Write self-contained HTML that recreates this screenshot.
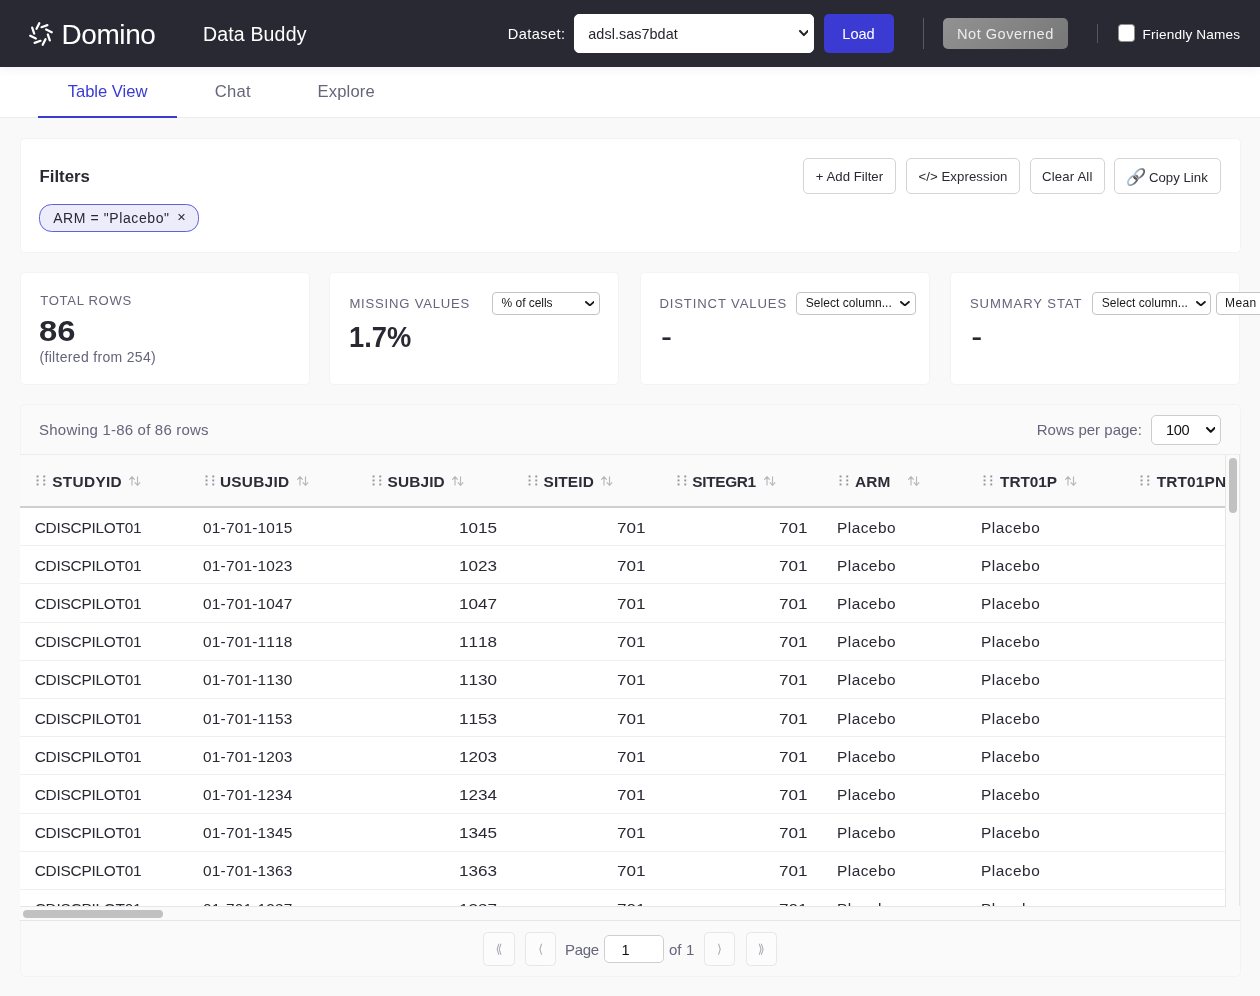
<!DOCTYPE html>
<html lang="en">
<head>
<meta charset="utf-8">
<title>Data Buddy</title>
<style>
*{box-sizing:border-box;margin:0;padding:0}
html,body{width:1260px;height:996px;overflow:hidden}
body{will-change:transform;background:#f9f9f9;font-family:"Liberation Sans",sans-serif;color:#292933;position:relative}
.abs{position:absolute}
.t{position:absolute;white-space:nowrap;line-height:1}
#hdr{position:absolute;left:0;top:0;width:1260px;height:66.7px;background:#292933;box-shadow:0 1px 11px rgba(0,0,0,.07);z-index:5}
#tabs{position:absolute;left:0;top:66px;width:1260px;height:52px;background:#fff;border-bottom:1px solid #ececec}
.card{position:absolute;background:#fff;border:1px solid #f3f3f3;border-radius:4.5px}
.btn{position:absolute;top:158px;height:36px;border:1px solid #d4d4d4;border-radius:5px;background:#fff}
.sel{position:absolute;background:#fff;border:1px solid #c4c4c4;border-radius:4px}
.row{position:absolute;left:0;width:1206px;height:1px;background:#efefef}
.pb{position:absolute;top:932px;height:34px;border:1px solid #e7e7e7;border-radius:4.5px;background:#fcfcfc;color:#a9a9b1;font-family:"DejaVu Sans",sans-serif;font-size:12.5px;line-height:32px;text-align:center}
</style>
</head>
<body>
<div id="hdr">
<svg class="abs" style="left:27px;top:20px" width="28" height="28" viewBox="27 20 28 28" fill="none" stroke="#fff" stroke-width="2.25" stroke-linecap="round"><path d="M39.28 23.25 36.52 28.85M47.38 25.18 41.48 27.19M51.75 32.28 46.15 29.52M49.82 40.38 47.81 34.48M42.72 44.75 45.48 39.15M34.62 42.82 40.52 40.81M30.25 35.72 35.85 38.48M32.18 27.62 34.19 33.52"/></svg>
<div class="t" style="left:61.6px;top:20.6px;font-size:28px;color:#fff;letter-spacing:-0.45px">Domino</div>
<div class="t" style="left:202.9px;top:24.7px;font-size:19.5px;color:#fff;letter-spacing:0.18px">Data Buddy</div>
<div class="t" style="left:507.8px;top:27.2px;font-size:14.6px;color:#fff;letter-spacing:0.40px">Dataset:</div>
<div class="sel" style="left:574px;top:14px;width:239.5px;height:38.5px;border-color:#fff;border-radius:5px"></div>
<div class="t" style="left:588.3px;top:27.2px;font-size:14.4px;color:#26262e;letter-spacing:0.05px">adsl.sas7bdat</div>
<svg class="abs" style="left:798.5px;top:30.3px" width="9.8" height="6.3" viewBox="0 0 9.8 6.3" fill="none" stroke="#222" stroke-width="2" stroke-linecap="round" stroke-linejoin="round"><path d="M1.00 1.00 4.90 5.10 8.80 1.00"/></svg>
<div class="abs" style="left:824px;top:14px;width:70px;height:38.5px;border-radius:5px;background:#3b3bd3"></div>
<div class="t" style="left:842.3px;top:27.0px;font-size:14.6px;color:#fff;letter-spacing:-0.02px">Load</div>
<div class="abs" style="left:923px;top:18px;width:1px;height:30.8px;background:#5a5a63"></div>
<div class="abs" style="left:943px;top:18px;width:125px;height:30.8px;border-radius:5px;background:linear-gradient(135deg,#929292,#777)"></div>
<div class="t" style="left:957.0px;top:27.0px;font-size:14.6px;color:#ececec;letter-spacing:0.50px">Not Governed</div>
<div class="abs" style="left:1097px;top:24px;width:1px;height:18.5px;background:#55555f"></div>
<div class="abs" style="left:1117.5px;top:24px;width:17.5px;height:17.5px;border-radius:3.5px;background:#fff;border:1px solid #8c8c8c"></div>
<div class="t" style="left:1142.6px;top:28.0px;font-size:13.6px;color:#fff;letter-spacing:0.18px">Friendly Names</div>
</div>
<div id="tabs"></div>
<div class="abs" style="left:38px;top:116px;width:139px;height:2px;background:#3b3bd3"></div>
<div class="t" style="left:67.7px;top:84.0px;font-size:16.6px;color:#3b3bd3;letter-spacing:-0.03px">Table View</div>
<div class="t" style="left:214.7px;top:84.0px;font-size:16.6px;color:#65657b;letter-spacing:0.30px">Chat</div>
<div class="t" style="left:317.6px;top:84.0px;font-size:16.6px;color:#65657b;letter-spacing:0.13px">Explore</div>
<div class="card" style="left:20px;top:138px;width:1220.5px;height:115px"></div>
<div class="t" style="left:39.6px;top:169.3px;font-size:16.8px;color:#292933;font-weight:bold;letter-spacing:-0.03px">Filters</div>
<div class="btn" style="left:803.2px;width:92.6px"></div>
<div class="t" style="left:815.8px;top:170.0px;font-size:13.2px;color:#292933;letter-spacing:0.02px">+ Add Filter</div>
<div class="btn" style="left:906.4px;width:113.5px"></div>
<div class="t" style="left:918.4px;top:170.0px;font-size:13.2px;color:#292933;letter-spacing:0.08px">&lt;/&gt; Expression</div>
<div class="btn" style="left:1030.4px;width:74.5px"></div>
<div class="t" style="left:1042.1px;top:170.0px;font-size:13.2px;color:#292933;letter-spacing:0.14px">Clear All</div>
<div class="btn" style="left:1114.2px;width:106.6px"></div>
<div class="t" style="left:1148.9px;top:171.0px;font-size:13.2px;color:#292933;letter-spacing:0.03px">Copy Link</div>
<svg class="abs" style="left:1126px;top:167px" width="20" height="20" viewBox="0 0 20 20" fill="none"><defs><linearGradient id="lg" x1="0" y1="0" x2="1" y2="1"><stop offset="0" stop-color="#b9d2e6"/><stop offset="0.55" stop-color="#8e99a4"/><stop offset="1" stop-color="#4a4242"/></linearGradient></defs><g transform="rotate(-45 10 10)" stroke="url(#lg)" stroke-width="2"><ellipse cx="5.4" cy="10" rx="5.9" ry="3.4"/><ellipse cx="14.6" cy="10" rx="5.9" ry="3.4"/><path d="M8.9 12.2C8.5 11.4 8.5 8.9 8.9 7.9" stroke="#574e4e" stroke-width="2.1"/></g></svg>
<div class="abs" style="left:39px;top:204px;width:160px;height:28px;border-radius:12.5px;background:#ececfb;border:1px solid #6060d9"></div>
<div class="t" style="left:53.2px;top:210.5px;font-size:14px;color:#292933;letter-spacing:0.59px">ARM = "Placebo"</div>
<div class="t" style="left:177.3px;top:209.6px;font-size:14.5px;color:#292933">×</div>
<div class="card" style="left:20.0px;top:272px;width:289.8px;height:113px"></div>
<div class="card" style="left:329.4px;top:272px;width:289.8px;height:113px"></div>
<div class="card" style="left:640.0px;top:272px;width:289.8px;height:113px"></div>
<div class="card" style="left:950.4px;top:272px;width:289.8px;height:113px"></div>
<div class="t" style="left:40.3px;top:293.9px;font-size:13.1px;color:#65657b;letter-spacing:0.67px">TOTAL ROWS</div>
<div class="t" style="left:39.3px;top:316.5px;font-size:29.2px;color:#292933;font-weight:bold;transform:scaleX(1.123);transform-origin:0 0">86</div>
<div class="t" style="left:39.5px;top:349.7px;font-size:14px;color:#65657b;letter-spacing:0.32px">(filtered from 254)</div>
<div class="t" style="left:349.4px;top:297.0px;font-size:13.1px;color:#65657b;letter-spacing:0.79px">MISSING VALUES</div>
<div class="t" style="left:348.6px;top:322.7px;font-size:29.2px;color:#292933;font-weight:bold;transform:scaleX(0.936);transform-origin:0 0">1.7%</div>
<div class="t" style="left:659.4px;top:297.0px;font-size:13.1px;color:#65657b;letter-spacing:0.88px">DISTINCT VALUES</div>
<div class="t" style="left:969.9px;top:297.0px;font-size:13.1px;color:#65657b;letter-spacing:0.91px">SUMMARY STAT</div>
<div class="t" style="left:660.9px;top:320.3px;font-size:33px;color:#292933">-</div>
<div class="t" style="left:971.3px;top:320.3px;font-size:33px;color:#292933">-</div>
<div class="sel" style="left:492.3px;top:292px;width:107.5px;height:23px"></div>
<div class="t" style="left:501.6px;top:296.8px;font-size:12px;color:#1a1a1a;letter-spacing:-0.04px">% of cells</div>
<svg class="abs" style="left:584.5px;top:300.6px" width="9.8" height="5.5" viewBox="0 0 9.8 5.5" fill="none" stroke="#1a1a1a" stroke-width="1.9" stroke-linecap="round" stroke-linejoin="round"><path d="M0.95 0.95 4.90 4.35 8.85 0.95"/></svg>
<div class="sel" style="left:796.1px;top:292px;width:119.6px;height:23px"></div>
<div class="t" style="left:805.7px;top:296.8px;font-size:12px;color:#1a1a1a;letter-spacing:0.05px">Select column...</div>
<svg class="abs" style="left:900.2px;top:300.6px" width="9.8" height="5.5" viewBox="0 0 9.8 5.5" fill="none" stroke="#1a1a1a" stroke-width="1.9" stroke-linecap="round" stroke-linejoin="round"><path d="M0.95 0.95 4.90 4.35 8.85 0.95"/></svg>
<div class="sel" style="left:1092.2px;top:292px;width:119.3px;height:23px"></div>
<div class="t" style="left:1101.7px;top:296.8px;font-size:12px;color:#1a1a1a;letter-spacing:0.06px">Select column...</div>
<svg class="abs" style="left:1196.3px;top:300.6px" width="9.8" height="5.5" viewBox="0 0 9.8 5.5" fill="none" stroke="#1a1a1a" stroke-width="1.9" stroke-linecap="round" stroke-linejoin="round"><path d="M0.95 0.95 4.90 4.35 8.85 0.95"/></svg>
<div class="sel" style="left:1216.3px;top:292px;width:73.7px;height:23px"></div>
<div class="t" style="left:1225.1px;top:296.8px;font-size:12px;color:#1a1a1a;letter-spacing:0.37px">Mean</div>
<div class="card" style="left:20px;top:404px;width:1220.5px;height:572.5px;background:#fafafa"></div>
<div class="t" style="left:39.1px;top:422.0px;font-size:15px;color:#65657b;letter-spacing:0.20px">Showing 1-86 of 86 rows</div>
<div class="t" style="left:1036.7px;top:421.8px;font-size:15px;color:#65657b;letter-spacing:0.01px">Rows per page:</div>
<div class="sel" style="left:1151.4px;top:415px;width:69.4px;height:30px;border-color:#cdcdcd;border-radius:5px"></div>
<div class="t" style="left:1166.1px;top:422.6px;font-size:14.6px;color:#111;letter-spacing:-0.37px">100</div>
<svg class="abs" style="left:1205.8px;top:427.4px" width="9.6" height="6.1" viewBox="0 0 9.6 6.1" fill="none" stroke="#111" stroke-width="2" stroke-linecap="round" stroke-linejoin="round"><path d="M1.00 1.00 4.80 4.90 8.60 1.00"/></svg>
<div class="abs" style="left:20.0px;top:454.3px;width:1219.5px;height:1px;background:#ececec"></div>
<div class="abs" style="left:20.0px;top:455.3px;width:1205.2px;height:450.8px;overflow:hidden;background:#fff">
<div class="abs" style="left:0;top:0;width:1206px;height:50.7px;background:#fafafa"></div>
<div class="abs" style="left:0;top:50.7px;width:1206px;height:2px;background:#cfcfcf"></div>
<svg class="abs" style="left:16.2px;top:20.1px" width="10" height="11" viewBox="0 0 10 11" fill="#92929c"><rect x="0.6" y="0.5" width="1.9" height="1.9"/><rect x="7.3" y="0.5" width="1.9" height="1.9"/><rect x="0.6" y="4.5" width="1.9" height="1.9"/><rect x="7.3" y="4.5" width="1.9" height="1.9"/><rect x="0.6" y="8.5" width="1.9" height="1.9"/><rect x="7.3" y="8.5" width="1.9" height="1.9"/></svg>
<div class="t" style="left:32.3px;top:18.5px;font-size:15.4px;color:#2d2d37;font-weight:bold;letter-spacing:0.30px">STUDYID</div>
<svg class="abs" style="left:109.0px;top:21.0px" width="12" height="10.5" viewBox="0 0 12 10.5" fill="none" stroke="#b7b7be" stroke-width="1.15" stroke-linecap="round" stroke-linejoin="round"><path d="M3 9V0.7M0.6 3.3 3 0.7 5.4 3.3M8.5 0.8V9.3M6.1 6.7 8.5 9.3 10.9 6.7"/></svg>
<svg class="abs" style="left:184.5px;top:20.1px" width="10" height="11" viewBox="0 0 10 11" fill="#92929c"><rect x="0.6" y="0.5" width="1.9" height="1.9"/><rect x="7.3" y="0.5" width="1.9" height="1.9"/><rect x="0.6" y="4.5" width="1.9" height="1.9"/><rect x="7.3" y="4.5" width="1.9" height="1.9"/><rect x="0.6" y="8.5" width="1.9" height="1.9"/><rect x="7.3" y="8.5" width="1.9" height="1.9"/></svg>
<div class="t" style="left:199.9px;top:18.5px;font-size:15.4px;color:#2d2d37;font-weight:bold;letter-spacing:0.28px">USUBJID</div>
<svg class="abs" style="left:276.8px;top:21.0px" width="12" height="10.5" viewBox="0 0 12 10.5" fill="none" stroke="#b7b7be" stroke-width="1.15" stroke-linecap="round" stroke-linejoin="round"><path d="M3 9V0.7M0.6 3.3 3 0.7 5.4 3.3M8.5 0.8V9.3M6.1 6.7 8.5 9.3 10.9 6.7"/></svg>
<svg class="abs" style="left:351.8px;top:20.1px" width="10" height="11" viewBox="0 0 10 11" fill="#92929c"><rect x="0.6" y="0.5" width="1.9" height="1.9"/><rect x="7.3" y="0.5" width="1.9" height="1.9"/><rect x="0.6" y="4.5" width="1.9" height="1.9"/><rect x="7.3" y="4.5" width="1.9" height="1.9"/><rect x="0.6" y="8.5" width="1.9" height="1.9"/><rect x="7.3" y="8.5" width="1.9" height="1.9"/></svg>
<div class="t" style="left:367.6px;top:18.5px;font-size:15.4px;color:#2d2d37;font-weight:bold;letter-spacing:0.13px">SUBJID</div>
<svg class="abs" style="left:432.2px;top:21.0px" width="12" height="10.5" viewBox="0 0 12 10.5" fill="none" stroke="#b7b7be" stroke-width="1.15" stroke-linecap="round" stroke-linejoin="round"><path d="M3 9V0.7M0.6 3.3 3 0.7 5.4 3.3M8.5 0.8V9.3M6.1 6.7 8.5 9.3 10.9 6.7"/></svg>
<svg class="abs" style="left:507.5px;top:20.1px" width="10" height="11" viewBox="0 0 10 11" fill="#92929c"><rect x="0.6" y="0.5" width="1.9" height="1.9"/><rect x="7.3" y="0.5" width="1.9" height="1.9"/><rect x="0.6" y="4.5" width="1.9" height="1.9"/><rect x="7.3" y="4.5" width="1.9" height="1.9"/><rect x="0.6" y="8.5" width="1.9" height="1.9"/><rect x="7.3" y="8.5" width="1.9" height="1.9"/></svg>
<div class="t" style="left:523.6px;top:18.5px;font-size:15.4px;color:#2d2d37;font-weight:bold;letter-spacing:0.11px">SITEID</div>
<svg class="abs" style="left:581.0px;top:21.0px" width="12" height="10.5" viewBox="0 0 12 10.5" fill="none" stroke="#b7b7be" stroke-width="1.15" stroke-linecap="round" stroke-linejoin="round"><path d="M3 9V0.7M0.6 3.3 3 0.7 5.4 3.3M8.5 0.8V9.3M6.1 6.7 8.5 9.3 10.9 6.7"/></svg>
<svg class="abs" style="left:656.8px;top:20.1px" width="10" height="11" viewBox="0 0 10 11" fill="#92929c"><rect x="0.6" y="0.5" width="1.9" height="1.9"/><rect x="7.3" y="0.5" width="1.9" height="1.9"/><rect x="0.6" y="4.5" width="1.9" height="1.9"/><rect x="7.3" y="4.5" width="1.9" height="1.9"/><rect x="0.6" y="8.5" width="1.9" height="1.9"/><rect x="7.3" y="8.5" width="1.9" height="1.9"/></svg>
<div class="t" style="left:672.3px;top:18.5px;font-size:15.4px;color:#2d2d37;font-weight:bold;letter-spacing:-0.34px">SITEGR1</div>
<svg class="abs" style="left:744.0px;top:21.0px" width="12" height="10.5" viewBox="0 0 12 10.5" fill="none" stroke="#b7b7be" stroke-width="1.15" stroke-linecap="round" stroke-linejoin="round"><path d="M3 9V0.7M0.6 3.3 3 0.7 5.4 3.3M8.5 0.8V9.3M6.1 6.7 8.5 9.3 10.9 6.7"/></svg>
<svg class="abs" style="left:819.2px;top:20.1px" width="10" height="11" viewBox="0 0 10 11" fill="#92929c"><rect x="0.6" y="0.5" width="1.9" height="1.9"/><rect x="7.3" y="0.5" width="1.9" height="1.9"/><rect x="0.6" y="4.5" width="1.9" height="1.9"/><rect x="7.3" y="4.5" width="1.9" height="1.9"/><rect x="0.6" y="8.5" width="1.9" height="1.9"/><rect x="7.3" y="8.5" width="1.9" height="1.9"/></svg>
<div class="t" style="left:835.1px;top:18.5px;font-size:15.4px;color:#2d2d37;font-weight:bold;letter-spacing:0.08px">ARM</div>
<svg class="abs" style="left:887.8px;top:21.0px" width="12" height="10.5" viewBox="0 0 12 10.5" fill="none" stroke="#b7b7be" stroke-width="1.15" stroke-linecap="round" stroke-linejoin="round"><path d="M3 9V0.7M0.6 3.3 3 0.7 5.4 3.3M8.5 0.8V9.3M6.1 6.7 8.5 9.3 10.9 6.7"/></svg>
<svg class="abs" style="left:962.5px;top:20.1px" width="10" height="11" viewBox="0 0 10 11" fill="#92929c"><rect x="0.6" y="0.5" width="1.9" height="1.9"/><rect x="7.3" y="0.5" width="1.9" height="1.9"/><rect x="0.6" y="4.5" width="1.9" height="1.9"/><rect x="7.3" y="4.5" width="1.9" height="1.9"/><rect x="0.6" y="8.5" width="1.9" height="1.9"/><rect x="7.3" y="8.5" width="1.9" height="1.9"/></svg>
<div class="t" style="left:980.1px;top:18.5px;font-size:15.4px;color:#2d2d37;font-weight:bold;letter-spacing:-0.07px">TRT01P</div>
<svg class="abs" style="left:1044.8px;top:21.0px" width="12" height="10.5" viewBox="0 0 12 10.5" fill="none" stroke="#b7b7be" stroke-width="1.15" stroke-linecap="round" stroke-linejoin="round"><path d="M3 9V0.7M0.6 3.3 3 0.7 5.4 3.3M8.5 0.8V9.3M6.1 6.7 8.5 9.3 10.9 6.7"/></svg>
<svg class="abs" style="left:1119.5px;top:20.1px" width="10" height="11" viewBox="0 0 10 11" fill="#92929c"><rect x="0.6" y="0.5" width="1.9" height="1.9"/><rect x="7.3" y="0.5" width="1.9" height="1.9"/><rect x="0.6" y="4.5" width="1.9" height="1.9"/><rect x="7.3" y="4.5" width="1.9" height="1.9"/><rect x="0.6" y="8.5" width="1.9" height="1.9"/><rect x="7.3" y="8.5" width="1.9" height="1.9"/></svg>
<div class="t" style="left:1136.8px;top:18.5px;font-size:15.4px;color:#2d2d37;font-weight:bold;letter-spacing:0.13px">TRT01PN</div>
<div class="t" style="left:14.7px;top:64.7px;font-size:15.4px;color:#292933;letter-spacing:-0.23px">CDISCPILOT01</div>
<div class="t" style="left:183.1px;top:64.7px;font-size:15.4px;color:#292933;letter-spacing:0.19px;font-kerning:none">01-701-1015</div>
<div class="t" style="left:438.5px;top:64.7px;font-size:15.4px;color:#292933;font-kerning:none;transform:scaleX(1.111);transform-origin:0 0">1015</div>
<div class="t" style="left:596.6px;top:64.7px;font-size:15.4px;color:#292933;font-kerning:none;transform:scaleX(1.111);transform-origin:0 0">701</div>
<div class="t" style="left:759.1px;top:64.7px;font-size:15.4px;color:#292933;font-kerning:none;transform:scaleX(1.111);transform-origin:0 0">701</div>
<div class="t" style="left:817.0px;top:64.7px;font-size:15.4px;color:#292933;letter-spacing:0.48px">Placebo</div>
<div class="t" style="left:961.0px;top:64.7px;font-size:15.4px;color:#292933;letter-spacing:0.52px">Placebo</div>
<div class="row" style="top:89.7px"></div>
<div class="t" style="left:14.7px;top:102.7px;font-size:15.4px;color:#292933;letter-spacing:-0.23px">CDISCPILOT01</div>
<div class="t" style="left:183.1px;top:102.7px;font-size:15.4px;color:#292933;letter-spacing:0.19px;font-kerning:none">01-701-1023</div>
<div class="t" style="left:438.5px;top:102.7px;font-size:15.4px;color:#292933;font-kerning:none;transform:scaleX(1.111);transform-origin:0 0">1023</div>
<div class="t" style="left:596.6px;top:102.7px;font-size:15.4px;color:#292933;font-kerning:none;transform:scaleX(1.111);transform-origin:0 0">701</div>
<div class="t" style="left:759.1px;top:102.7px;font-size:15.4px;color:#292933;font-kerning:none;transform:scaleX(1.111);transform-origin:0 0">701</div>
<div class="t" style="left:817.0px;top:102.7px;font-size:15.4px;color:#292933;letter-spacing:0.48px">Placebo</div>
<div class="t" style="left:961.0px;top:102.7px;font-size:15.4px;color:#292933;letter-spacing:0.52px">Placebo</div>
<div class="row" style="top:127.7px"></div>
<div class="t" style="left:14.7px;top:140.7px;font-size:15.4px;color:#292933;letter-spacing:-0.23px">CDISCPILOT01</div>
<div class="t" style="left:183.1px;top:140.7px;font-size:15.4px;color:#292933;letter-spacing:0.19px;font-kerning:none">01-701-1047</div>
<div class="t" style="left:438.5px;top:140.7px;font-size:15.4px;color:#292933;font-kerning:none;transform:scaleX(1.111);transform-origin:0 0">1047</div>
<div class="t" style="left:596.6px;top:140.7px;font-size:15.4px;color:#292933;font-kerning:none;transform:scaleX(1.111);transform-origin:0 0">701</div>
<div class="t" style="left:759.1px;top:140.7px;font-size:15.4px;color:#292933;font-kerning:none;transform:scaleX(1.111);transform-origin:0 0">701</div>
<div class="t" style="left:817.0px;top:140.7px;font-size:15.4px;color:#292933;letter-spacing:0.48px">Placebo</div>
<div class="t" style="left:961.0px;top:140.7px;font-size:15.4px;color:#292933;letter-spacing:0.52px">Placebo</div>
<div class="row" style="top:166.7px"></div>
<div class="t" style="left:14.7px;top:178.7px;font-size:15.4px;color:#292933;letter-spacing:-0.23px">CDISCPILOT01</div>
<div class="t" style="left:183.1px;top:178.7px;font-size:15.4px;color:#292933;letter-spacing:0.19px;font-kerning:none">01-701-1118</div>
<div class="t" style="left:438.5px;top:178.7px;font-size:15.4px;color:#292933;font-kerning:none;transform:scaleX(1.111);transform-origin:0 0">1118</div>
<div class="t" style="left:596.6px;top:178.7px;font-size:15.4px;color:#292933;font-kerning:none;transform:scaleX(1.111);transform-origin:0 0">701</div>
<div class="t" style="left:759.1px;top:178.7px;font-size:15.4px;color:#292933;font-kerning:none;transform:scaleX(1.111);transform-origin:0 0">701</div>
<div class="t" style="left:817.0px;top:178.7px;font-size:15.4px;color:#292933;letter-spacing:0.48px">Placebo</div>
<div class="t" style="left:961.0px;top:178.7px;font-size:15.4px;color:#292933;letter-spacing:0.52px">Placebo</div>
<div class="row" style="top:204.7px"></div>
<div class="t" style="left:14.7px;top:216.7px;font-size:15.4px;color:#292933;letter-spacing:-0.23px">CDISCPILOT01</div>
<div class="t" style="left:183.1px;top:216.7px;font-size:15.4px;color:#292933;letter-spacing:0.19px;font-kerning:none">01-701-1130</div>
<div class="t" style="left:438.5px;top:216.7px;font-size:15.4px;color:#292933;font-kerning:none;transform:scaleX(1.111);transform-origin:0 0">1130</div>
<div class="t" style="left:596.6px;top:216.7px;font-size:15.4px;color:#292933;font-kerning:none;transform:scaleX(1.111);transform-origin:0 0">701</div>
<div class="t" style="left:759.1px;top:216.7px;font-size:15.4px;color:#292933;font-kerning:none;transform:scaleX(1.111);transform-origin:0 0">701</div>
<div class="t" style="left:817.0px;top:216.7px;font-size:15.4px;color:#292933;letter-spacing:0.48px">Placebo</div>
<div class="t" style="left:961.0px;top:216.7px;font-size:15.4px;color:#292933;letter-spacing:0.52px">Placebo</div>
<div class="row" style="top:242.7px"></div>
<div class="t" style="left:14.7px;top:255.7px;font-size:15.4px;color:#292933;letter-spacing:-0.23px">CDISCPILOT01</div>
<div class="t" style="left:183.1px;top:255.7px;font-size:15.4px;color:#292933;letter-spacing:0.19px;font-kerning:none">01-701-1153</div>
<div class="t" style="left:438.5px;top:255.7px;font-size:15.4px;color:#292933;font-kerning:none;transform:scaleX(1.111);transform-origin:0 0">1153</div>
<div class="t" style="left:596.6px;top:255.7px;font-size:15.4px;color:#292933;font-kerning:none;transform:scaleX(1.111);transform-origin:0 0">701</div>
<div class="t" style="left:759.1px;top:255.7px;font-size:15.4px;color:#292933;font-kerning:none;transform:scaleX(1.111);transform-origin:0 0">701</div>
<div class="t" style="left:817.0px;top:255.7px;font-size:15.4px;color:#292933;letter-spacing:0.48px">Placebo</div>
<div class="t" style="left:961.0px;top:255.7px;font-size:15.4px;color:#292933;letter-spacing:0.52px">Placebo</div>
<div class="row" style="top:280.7px"></div>
<div class="t" style="left:14.7px;top:293.7px;font-size:15.4px;color:#292933;letter-spacing:-0.23px">CDISCPILOT01</div>
<div class="t" style="left:183.1px;top:293.7px;font-size:15.4px;color:#292933;letter-spacing:0.19px;font-kerning:none">01-701-1203</div>
<div class="t" style="left:438.5px;top:293.7px;font-size:15.4px;color:#292933;font-kerning:none;transform:scaleX(1.111);transform-origin:0 0">1203</div>
<div class="t" style="left:596.6px;top:293.7px;font-size:15.4px;color:#292933;font-kerning:none;transform:scaleX(1.111);transform-origin:0 0">701</div>
<div class="t" style="left:759.1px;top:293.7px;font-size:15.4px;color:#292933;font-kerning:none;transform:scaleX(1.111);transform-origin:0 0">701</div>
<div class="t" style="left:817.0px;top:293.7px;font-size:15.4px;color:#292933;letter-spacing:0.48px">Placebo</div>
<div class="t" style="left:961.0px;top:293.7px;font-size:15.4px;color:#292933;letter-spacing:0.52px">Placebo</div>
<div class="row" style="top:318.7px"></div>
<div class="t" style="left:14.7px;top:331.7px;font-size:15.4px;color:#292933;letter-spacing:-0.23px">CDISCPILOT01</div>
<div class="t" style="left:183.1px;top:331.7px;font-size:15.4px;color:#292933;letter-spacing:0.19px;font-kerning:none">01-701-1234</div>
<div class="t" style="left:438.5px;top:331.7px;font-size:15.4px;color:#292933;font-kerning:none;transform:scaleX(1.111);transform-origin:0 0">1234</div>
<div class="t" style="left:596.6px;top:331.7px;font-size:15.4px;color:#292933;font-kerning:none;transform:scaleX(1.111);transform-origin:0 0">701</div>
<div class="t" style="left:759.1px;top:331.7px;font-size:15.4px;color:#292933;font-kerning:none;transform:scaleX(1.111);transform-origin:0 0">701</div>
<div class="t" style="left:817.0px;top:331.7px;font-size:15.4px;color:#292933;letter-spacing:0.48px">Placebo</div>
<div class="t" style="left:961.0px;top:331.7px;font-size:15.4px;color:#292933;letter-spacing:0.52px">Placebo</div>
<div class="row" style="top:357.7px"></div>
<div class="t" style="left:14.7px;top:369.7px;font-size:15.4px;color:#292933;letter-spacing:-0.23px">CDISCPILOT01</div>
<div class="t" style="left:183.1px;top:369.7px;font-size:15.4px;color:#292933;letter-spacing:0.19px;font-kerning:none">01-701-1345</div>
<div class="t" style="left:438.5px;top:369.7px;font-size:15.4px;color:#292933;font-kerning:none;transform:scaleX(1.111);transform-origin:0 0">1345</div>
<div class="t" style="left:596.6px;top:369.7px;font-size:15.4px;color:#292933;font-kerning:none;transform:scaleX(1.111);transform-origin:0 0">701</div>
<div class="t" style="left:759.1px;top:369.7px;font-size:15.4px;color:#292933;font-kerning:none;transform:scaleX(1.111);transform-origin:0 0">701</div>
<div class="t" style="left:817.0px;top:369.7px;font-size:15.4px;color:#292933;letter-spacing:0.48px">Placebo</div>
<div class="t" style="left:961.0px;top:369.7px;font-size:15.4px;color:#292933;letter-spacing:0.52px">Placebo</div>
<div class="row" style="top:395.7px"></div>
<div class="t" style="left:14.7px;top:407.7px;font-size:15.4px;color:#292933;letter-spacing:-0.23px">CDISCPILOT01</div>
<div class="t" style="left:183.1px;top:407.7px;font-size:15.4px;color:#292933;letter-spacing:0.19px;font-kerning:none">01-701-1363</div>
<div class="t" style="left:438.5px;top:407.7px;font-size:15.4px;color:#292933;font-kerning:none;transform:scaleX(1.111);transform-origin:0 0">1363</div>
<div class="t" style="left:596.6px;top:407.7px;font-size:15.4px;color:#292933;font-kerning:none;transform:scaleX(1.111);transform-origin:0 0">701</div>
<div class="t" style="left:759.1px;top:407.7px;font-size:15.4px;color:#292933;font-kerning:none;transform:scaleX(1.111);transform-origin:0 0">701</div>
<div class="t" style="left:817.0px;top:407.7px;font-size:15.4px;color:#292933;letter-spacing:0.48px">Placebo</div>
<div class="t" style="left:961.0px;top:407.7px;font-size:15.4px;color:#292933;letter-spacing:0.52px">Placebo</div>
<div class="row" style="top:433.7px"></div>
<div class="t" style="left:14.7px;top:445.7px;font-size:15.4px;color:#292933;letter-spacing:-0.23px">CDISCPILOT01</div>
<div class="t" style="left:183.1px;top:445.7px;font-size:15.4px;color:#292933;letter-spacing:0.19px;font-kerning:none">01-701-1387</div>
<div class="t" style="left:438.5px;top:445.7px;font-size:15.4px;color:#292933;font-kerning:none;transform:scaleX(1.111);transform-origin:0 0">1387</div>
<div class="t" style="left:596.6px;top:445.7px;font-size:15.4px;color:#292933;font-kerning:none;transform:scaleX(1.111);transform-origin:0 0">701</div>
<div class="t" style="left:759.1px;top:445.7px;font-size:15.4px;color:#292933;font-kerning:none;transform:scaleX(1.111);transform-origin:0 0">701</div>
<div class="t" style="left:817.0px;top:445.7px;font-size:15.4px;color:#292933;letter-spacing:0.48px">Placebo</div>
<div class="t" style="left:961.0px;top:445.7px;font-size:15.4px;color:#292933;letter-spacing:0.52px">Placebo</div>
</div>
<div class="abs" style="left:1225.2px;top:455.3px;width:14.8px;height:450.8px;background:#fafafa;border-left:1px solid #e6e6e6"></div>
<div class="abs" style="left:1229.2px;top:458px;width:7.6px;height:54.5px;border-radius:4px;background:#c1c1c1"></div>
<div class="abs" style="left:1239px;top:454.3px;width:1px;height:466.4px;background:#e6e6e6"></div>
<div class="abs" style="left:20.0px;top:906.1px;width:1220px;height:14.6px;background:#fafafa;border-bottom:1px solid #e6e6e6"></div>
<div class="abs" style="left:20.0px;top:906.1px;width:1206px;height:1px;background:#e6e6e6"></div>
<div class="abs" style="left:23.1px;top:910.1px;width:139.8px;height:7.8px;border-radius:4px;background:#c1c1c1"></div>
<div class="pb" style="left:483.2px;width:31.5px">⟪</div>
<div class="pb" style="left:525.4px;width:30.4px">⟨</div>
<div class="pb" style="left:704.2px;width:30.4px">⟩</div>
<div class="pb" style="left:745.6px;width:31.2px">⟫</div>
<div class="t" style="left:565.0px;top:941.8px;font-size:15px;color:#65657b;letter-spacing:-0.35px">Page</div>
<div class="sel" style="left:604.3px;top:935.2px;width:59.5px;height:27.5px;border-color:#cfcfcf;border-radius:5px"></div>
<div class="t" style="left:621.5px;top:942.6px;font-size:14.6px;color:#111">1</div>
<div class="t" style="left:668.9px;top:941.8px;font-size:15px;color:#65657b;letter-spacing:0.12px">of 1</div>
</body>
</html>
